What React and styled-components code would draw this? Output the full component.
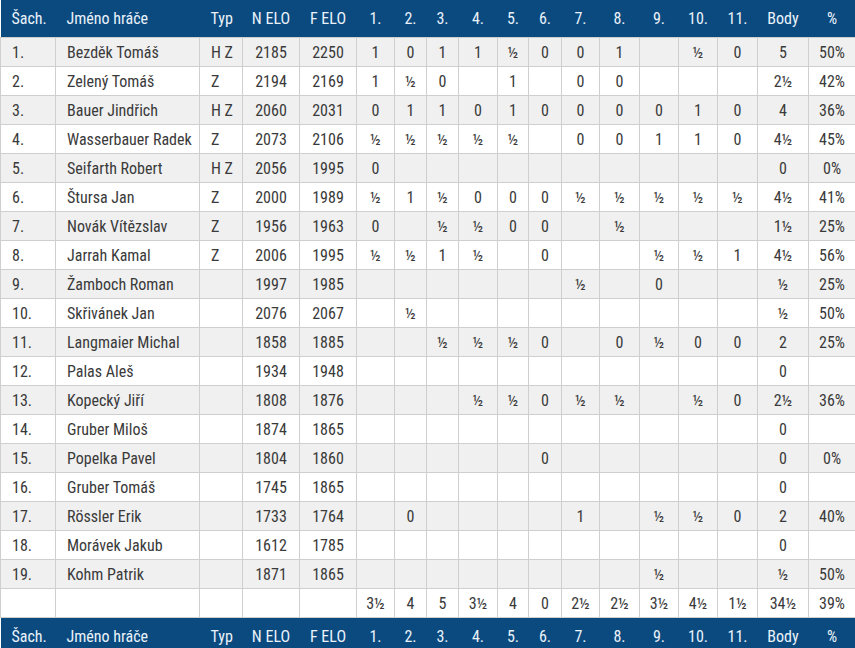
import React from "react";
import styled, { createGlobalStyle } from "styled-components";

const GlobalStyle = createGlobalStyle`
  html, body {
    margin: 0;
    padding: 0;
    background: #ffffff;
  }
  body {
    font-family: "Roboto Condensed", Roboto, "Liberation Sans", sans-serif;
  }
`;

const widths = [55, 144, 43, 57, 57, 38, 32, 32, 39, 31, 33, 38, 40, 39, 39, 40, 51, 47];
const headers = ["Šach.", "Jméno hráče", "Typ", "N ELO", "F ELO", "1.", "2.", "3.", "4.", "5.", "6.", "7.", "8.", "9.", "10.", "11.", "Body", "%"];

const players = [
  ["1.", "Bezděk Tomáš", "H Z", "2185", "2250", ["1", "0", "1", "1", "½", "0", "0", "1", "", "½", "0"], "5", "50%"],
  ["2.", "Zelený Tomáš", "Z", "2194", "2169", ["1", "½", "0", "", "1", "", "0", "0", "", "", ""], "2½", "42%"],
  ["3.", "Bauer Jindřich", "H Z", "2060", "2031", ["0", "1", "1", "0", "1", "0", "0", "0", "0", "1", "0"], "4", "36%"],
  ["4.", "Wasserbauer Radek", "Z", "2073", "2106", ["½", "½", "½", "½", "½", "", "0", "0", "1", "1", "0"], "4½", "45%"],
  ["5.", "Seifarth Robert", "H Z", "2056", "1995", ["0", "", "", "", "", "", "", "", "", "", ""], "0", "0%"],
  ["6.", "Štursa Jan", "Z", "2000", "1989", ["½", "1", "½", "0", "0", "0", "½", "½", "½", "½", "½"], "4½", "41%"],
  ["7.", "Novák Vítězslav", "Z", "1956", "1963", ["0", "", "½", "½", "0", "0", "", "½", "", "", ""], "1½", "25%"],
  ["8.", "Jarrah Kamal", "Z", "2006", "1995", ["½", "½", "1", "½", "", "0", "", "", "½", "½", "1"], "4½", "56%"],
  ["9.", "Žamboch Roman", "", "1997", "1985", ["", "", "", "", "", "", "½", "", "0", "", ""], "½", "25%"],
  ["10.", "Skřivánek Jan", "", "2076", "2067", ["", "½", "", "", "", "", "", "", "", "", ""], "½", "50%"],
  ["11.", "Langmaier Michal", "", "1858", "1885", ["", "", "½", "½", "½", "0", "", "0", "½", "0", "0"], "2", "25%"],
  ["12.", "Palas Aleš", "", "1934", "1948", ["", "", "", "", "", "", "", "", "", "", ""], "0", ""],
  ["13.", "Kopecký Jiří", "", "1808", "1876", ["", "", "", "½", "½", "0", "½", "½", "", "½", "0"], "2½", "36%"],
  ["14.", "Gruber Miloš", "", "1874", "1865", ["", "", "", "", "", "", "", "", "", "", ""], "0", ""],
  ["15.", "Popelka Pavel", "", "1804", "1860", ["", "", "", "", "", "0", "", "", "", "", ""], "0", "0%"],
  ["16.", "Gruber Tomáš", "", "1745", "1865", ["", "", "", "", "", "", "", "", "", "", ""], "0", ""],
  ["17.", "Rössler Erik", "", "1733", "1764", ["", "0", "", "", "", "", "1", "", "½", "½", "0"], "2", "40%"],
  ["18.", "Morávek Jakub", "", "1612", "1785", ["", "", "", "", "", "", "", "", "", "", ""], "0", ""],
  ["19.", "Kohm Patrik", "", "1871", "1865", ["", "", "", "", "", "", "", "", "½", "", ""], "½", "50%"],
];

const totals = ["3½", "4", "5", "3½", "4", "0", "2½", "2½", "3½", "4½", "1½"];

const Table = styled.table`
  width: 855px;
  border-collapse: collapse;
  table-layout: fixed;
  font-size: 16px;
  color: #3a3a3a;
`;

const HeadRow = styled.tr`
  background: #0b4a7f;
  color: #eaf2fa;
`;

const HeadCell = styled.th`
  height: 37px;
  padding: 0;
  font-weight: 400;
  text-align: ${(p) => (p.$left ? "left" : "center")};
  padding-left: ${(p) => (p.$left ? "11px" : "0")};
  white-space: nowrap;
`;

const Row = styled.tr`
  background: ${(p) => (p.$striped ? "#f0f0f0" : "#ffffff")};
`;

const Cell = styled.td`
  height: 28px;
  padding: 0;
  border: 1px solid #cfcfcf;
  text-align: ${(p) => (p.$left ? "left" : "center")};
  padding-left: ${(p) => (p.$left ? "11px" : "0")};
  white-space: nowrap;
  overflow: hidden;
`;

const HeaderRow = () => (
  <HeadRow>
    {headers.map((h, i) => (
      <HeadCell key={i} $left={i < 3}>
        {h}
      </HeadCell>
    ))}
  </HeadRow>
);

export default function App() {
  return (
    <>
      <GlobalStyle />
      <Table>
        <colgroup>
          {widths.map((w, i) => (
            <col key={i} style={{ width: w }} />
          ))}
        </colgroup>
        <thead>
          <HeaderRow />
        </thead>
        <tbody>
          {players.map(([rank, name, typ, nelo, felo, results, body, pct], i) => (
            <Row key={rank} $striped={i % 2 === 0}>
              <Cell $left>{rank}</Cell>
              <Cell $left>{name}</Cell>
              <Cell $left>{typ}</Cell>
              <Cell>{nelo}</Cell>
              <Cell>{felo}</Cell>
              {results.map((r, j) => (
                <Cell key={j}>{r}</Cell>
              ))}
              <Cell>{body}</Cell>
              <Cell>{pct}</Cell>
            </Row>
          ))}
          <Row>
            <Cell />
            <Cell />
            <Cell />
            <Cell />
            <Cell />
            {totals.map((t, j) => (
              <Cell key={j}>{t}</Cell>
            ))}
            <Cell>34½</Cell>
            <Cell>39%</Cell>
          </Row>
        </tbody>
        <tfoot>
          <HeaderRow />
        </tfoot>
      </Table>
    </>
  );
}
